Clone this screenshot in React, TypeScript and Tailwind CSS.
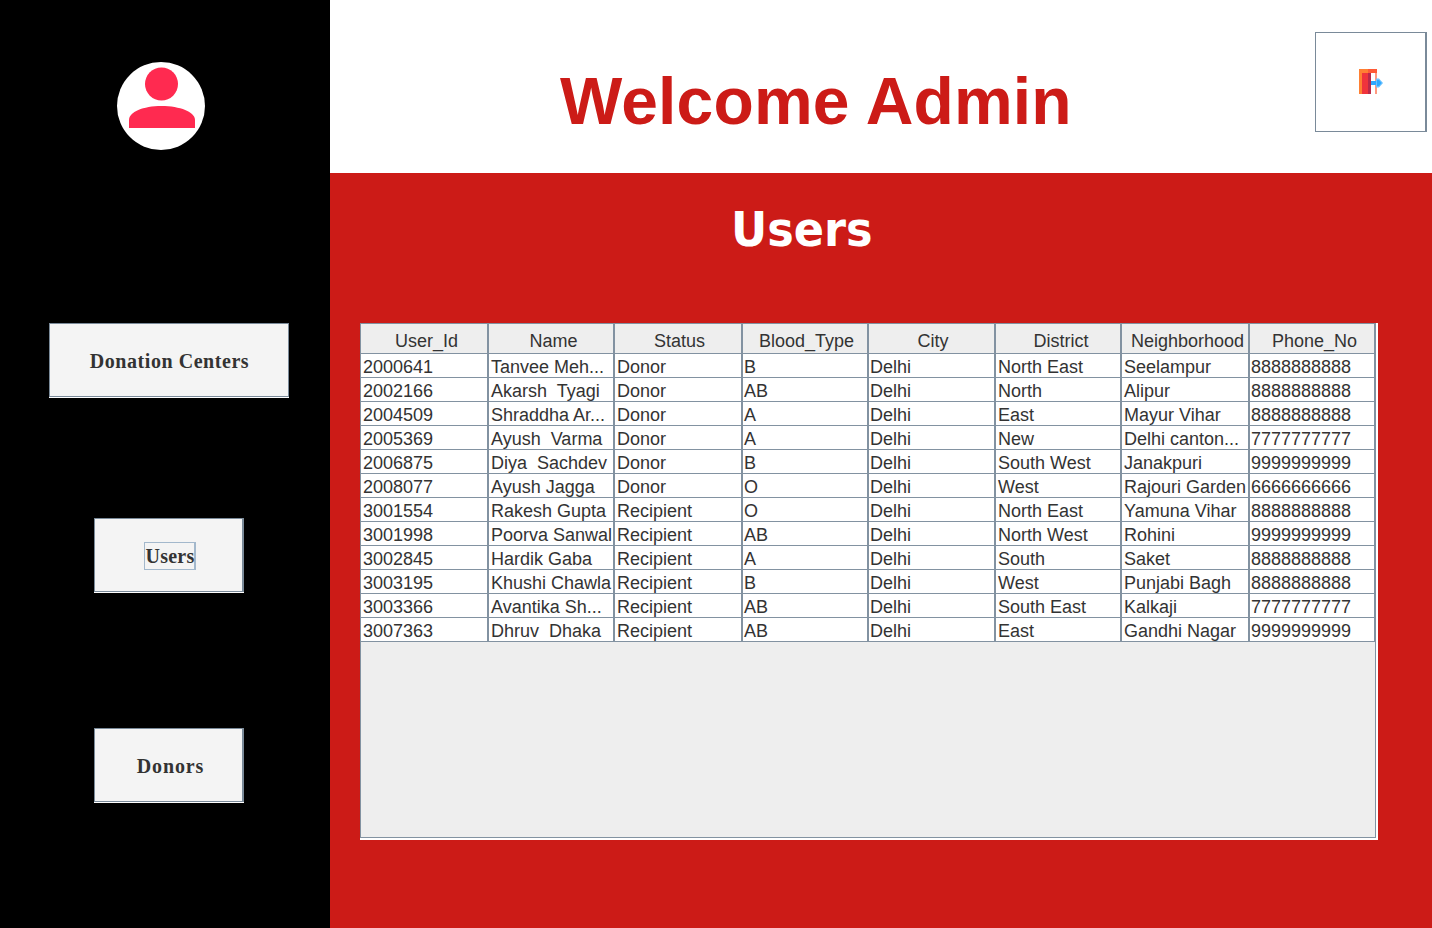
const headers = ["User_Id", "Name", "Status", "Blood_Type", "City", "District", "Neighborhood", "Phone_No"];
const rows = [
  ["2000641", "Tanvee Meh...", "Donor", "B", "Delhi", "North East", "Seelampur", "8888888888"],
  ["2002166", "Akarsh  Tyagi", "Donor", "AB", "Delhi", "North", "Alipur", "8888888888"],
  ["2004509", "Shraddha Ar...", "Donor", "A", "Delhi", "East", "Mayur Vihar", "8888888888"],
  ["2005369", "Ayush  Varma", "Donor", "A", "Delhi", "New", "Delhi canton...", "7777777777"],
  ["2006875", "Diya  Sachdev", "Donor", "B", "Delhi", "South West", "Janakpuri", "9999999999"],
  ["2008077", "Ayush Jagga", "Donor", "O", "Delhi", "West", "Rajouri Garden", "6666666666"],
  ["3001554", "Rakesh Gupta", "Recipient", "O", "Delhi", "North East", "Yamuna Vihar", "8888888888"],
  ["3001998", "Poorva Sanwal", "Recipient", "AB", "Delhi", "North West", "Rohini", "9999999999"],
  ["3002845", "Hardik Gaba", "Recipient", "A", "Delhi", "South", "Saket", "8888888888"],
  ["3003195", "Khushi Chawla", "Recipient", "B", "Delhi", "West", "Punjabi Bagh", "8888888888"],
  ["3003366", "Avantika Sh...", "Recipient", "AB", "Delhi", "South East", "Kalkaji", "7777777777"],
  ["3007363", "Dhruv  Dhaka", "Recipient", "AB", "Delhi", "East", "Gandhi Nagar", "9999999999"],
];

const gridCols = "grid grid-cols-[128px_126px_128px_126px_127px_126px_128px_125px]";
const btn = "flex items-center justify-center bg-[#f4f4f4] border border-[#7a8a99] shadow-[0_1px_0_#ffffff] font-['Liberation_Serif',serif] font-bold text-[20px] text-[#333333]";

function Avatar() {
  return (
    <svg width="88" height="88" viewBox="0 0 88 88" className="block">
      <circle cx="44" cy="44" r="44" fill="#ffffff" />
      <circle cx="44.5" cy="22" r="16.5" fill="#ff2a50" />
      <path d="M12 66 V58 C12 50 26 44 44.5 44 C63 44 78 50 78 58 V66 Z" fill="#ff2a50" />
    </svg>
  );
}

function ExitIcon() {
  return (
    <svg width="24" height="25" viewBox="0 0 24 25" className="block">
      <rect x="0" y="0" width="18" height="25" fill="#ff5a36" />
      <rect x="0" y="0" width="9" height="25" fill="#ff8033" />
      <rect x="3" y="4" width="9" height="21" fill="#f0343c" />
      <rect x="9" y="4" width="3" height="21" fill="#b92a4a" />
      <rect x="12" y="4" width="4" height="21" fill="#ffffff" />
      <rect x="16" y="4" width="2" height="21" fill="#ff9a80" />
      <rect x="12" y="12" width="8" height="4" fill="#2ea8ff" />
      <path d="M17 9.5 H20 L24 14 L20 18.5 H17 Z" fill="#6cc2ff" />
      <path d="M18 11 H20 L22.5 14 L20 17 H18 Z" fill="#2ea8ff" />
    </svg>
  );
}

export default function App() {
  return (
    <div className="flex h-[928px] w-[1432px] overflow-hidden font-['Liberation_Sans',sans-serif]">
      <aside className="flex w-[330px] flex-col items-start bg-black">
        <div className="ml-[117px] mt-[62px]">
          <Avatar />
        </div>
        <button className={`${btn} ml-[49px] mt-[173px] h-[74px] w-[240px] pl-[1px] pt-[2px] tracking-[0.55px]`}>Donation Centers</button>
        <button className={`${btn} ml-[94px] mt-[121px] h-[74px] w-[150px] border-r-2 tracking-[0.2px]`}>
          <span className="ml-[3px] mt-[2px] inline-block h-[28px] border border-r-2 border-[#a3b8cc] pl-px leading-[26px]">Users</span>
        </button>
        <button className={`${btn} ml-[94px] mt-[136px] h-[74px] w-[150px] border-r-2 pl-[4px] pt-[2px] tracking-[0.85px]`}>Donors</button>
      </aside>
      <main className="flex flex-1 flex-col">
        <header className="flex h-[173px] items-start bg-white">
          <h1 className="ml-[230px] mt-[61px] text-[66px] font-bold leading-[80px] tracking-[0.15px] text-[#cc1b17]">Welcome Admin</h1>
          <button className="ml-auto mr-[5px] mt-[32px] flex h-[100px] w-[112px] items-center justify-center border border-r-2 border-[#7a8a99] bg-white pb-[2px] pl-[1px]">
            <ExitIcon />
          </button>
        </header>
        <section className="flex flex-1 flex-col bg-[#cc1b17]">
          <h2 className="ml-[401px] mt-[26px] w-fit origin-left scale-x-[0.93] font-['DejaVu_Sans',sans-serif] text-[48px] font-bold leading-[60px] text-white">Users</h2>
          <div className="ml-[30px] mt-[64px] h-[517px] w-[1018px] border-b-2 border-r-2 border-white">
            <div className="h-full border border-[#8292a1] bg-[#eeeeee] text-[18px] text-[#333333]">
              <div className={`${gridCols} h-[30px]`}>
                {headers.map((h, i) => (
                  <div key={h} className={`flex items-center justify-center border-b border-[#8292a1] bg-[#eeeeee] pt-[4px] leading-none ${i === 7 ? "border-r" : "border-r-2"} ${i >= 2 && i <= 4 ? "pl-[3px]" : i === 5 ? "pl-[6px]" : "pl-[5px]"}`}>
                    {h}
                  </div>
                ))}
              </div>
              {rows.map((r) => (
                <div key={r[0]} className={`${gridCols} h-[24px] bg-white`}>
                  {r.map((c, i) => (
                    <div key={i} className={`flex items-center overflow-hidden whitespace-pre border-b border-[#8292a1] pt-[2px] leading-none ${i === 7 ? "border-r" : "border-r-2"} ${i === 3 || i === 4 || i === 7 ? "pl-[1px]" : "pl-[2px]"}`}>
                      {c}
                    </div>
                  ))}
                </div>
              ))}
            </div>
          </div>
        </section>
      </main>
    </div>
  );
}
